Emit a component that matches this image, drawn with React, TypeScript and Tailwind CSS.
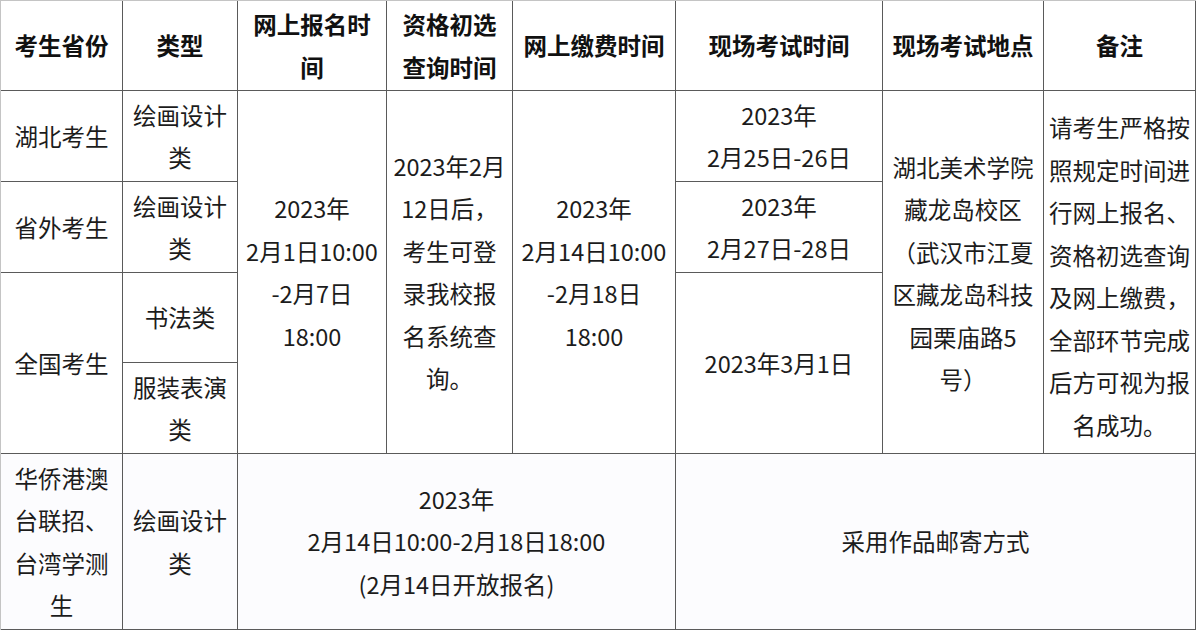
import React from "react";

type CellProps = {
  lines: string[];
  cls: string;
  bold?: boolean;
  bg?: string;
};

function Cell({ lines, cls, bold, bg }: CellProps) {
  return (
    <div
      className={`flex flex-col items-center justify-center text-center whitespace-nowrap ${bg ?? "bg-white"} ${
        bold ? "font-bold text-[#111]" : "font-normal text-[#1c1c1c]"
      } ${cls}`}
    >
      {lines.map((l, i) => (
        <div key={i}>{l}</div>
      ))}
    </div>
  );
}

export default function App() {
  const last = "bg-[#fcfcfe]";
  return (
    <div className="w-[1200px] h-[632px] bg-white overflow-hidden">
      <div
        className="grid w-[1196px] h-[630px] gap-px pr-px pb-px border-l border-t border-[#c4c4c4] bg-[#5a5a5a] grid-cols-[121px_114px_148px_125px_162px_206px_160px_151px] grid-rows-[89px_90px_90px_89px_90px_175px] text-[23.5px] leading-[42.5px]"
        style={{ fontFamily: '"Noto Sans CJK SC", "Noto Sans", sans-serif' }}
      >
        {/* header */}
        <Cell bold cls="col-start-1 row-start-1" lines={["考生省份"]} />
        <Cell bold cls="col-start-2 row-start-1" lines={["类型"]} />
        <Cell bold cls="col-start-3 row-start-1" lines={["网上报名时", "间"]} />
        <Cell bold cls="col-start-4 row-start-1" lines={["资格初选", "查询时间"]} />
        <Cell bold cls="col-start-5 row-start-1" lines={["网上缴费时间"]} />
        <Cell bold cls="col-start-6 row-start-1" lines={["现场考试时间"]} />
        <Cell bold cls="col-start-7 row-start-1" lines={["现场考试地点"]} />
        <Cell bold cls="col-start-8 row-start-1" lines={["备注"]} />

        {/* column 1 */}
        <Cell cls="col-start-1 row-start-2" lines={["湖北考生"]} />
        <Cell cls="col-start-1 row-start-3" lines={["省外考生"]} />
        <Cell cls="col-start-1 row-start-4 row-span-2" lines={["全国考生"]} />
        <Cell
          bg={last}
          cls="col-start-1 row-start-6"
          lines={["华侨港澳", "台联招、", "台湾学测", "生"]}
        />

        {/* column 2 */}
        <Cell cls="col-start-2 row-start-2" lines={["绘画设计", "类"]} />
        <Cell cls="col-start-2 row-start-3" lines={["绘画设计", "类"]} />
        <Cell cls="col-start-2 row-start-4" lines={["书法类"]} />
        <Cell cls="col-start-2 row-start-5" lines={["服装表演", "类"]} />
        <Cell bg={last} cls="col-start-2 row-start-6" lines={["绘画设计", "类"]} />

        {/* column 3 */}
        <Cell
          cls="col-start-3 row-start-2 row-span-4"
          lines={["2023年", "2月1日10:00", "-2月7日", "18:00"]}
        />
        {/* column 4 */}
        <Cell
          cls="col-start-4 row-start-2 row-span-4"
          lines={["2023年2月", "12日后，", "考生可登", "录我校报", "名系统查", "询。"]}
        />
        {/* column 5 */}
        <Cell
          cls="col-start-5 row-start-2 row-span-4"
          lines={["2023年", "2月14日10:00", "-2月18日", "18:00"]}
        />
        {/* column 6 */}
        <Cell cls="col-start-6 row-start-2" lines={["2023年", "2月25日-26日"]} />
        <Cell cls="col-start-6 row-start-3" lines={["2023年", "2月27日-28日"]} />
        <Cell cls="col-start-6 row-start-4 row-span-2" lines={["2023年3月1日"]} />

        {/* column 7 */}
        <Cell
          cls="col-start-7 row-start-2 row-span-4 pt-[2px]"
          lines={["湖北美术学院", "藏龙岛校区", "（武汉市江夏", "区藏龙岛科技", "园栗庙路5", "号）"]}
        />
        {/* column 8 */}
        <Cell
          cls="col-start-8 row-start-2 row-span-4 pt-[8px]"
          lines={[
            "请考生严格按",
            "照规定时间进",
            "行网上报名、",
            "资格初选查询",
            "及网上缴费，",
            "全部环节完成",
            "后方可视为报",
            "名成功。",
          ]}
        />

        {/* last row spans */}
        <Cell
          bg={last}
          cls="col-start-3 col-span-3 row-start-6"
          lines={["2023年", "2月14日10:00-2月18日18:00", "(2月14日开放报名)"]}
        />
        <Cell bg={last} cls="col-start-6 col-span-3 row-start-6" lines={["采用作品邮寄方式"]} />
      </div>
    </div>
  );
}
